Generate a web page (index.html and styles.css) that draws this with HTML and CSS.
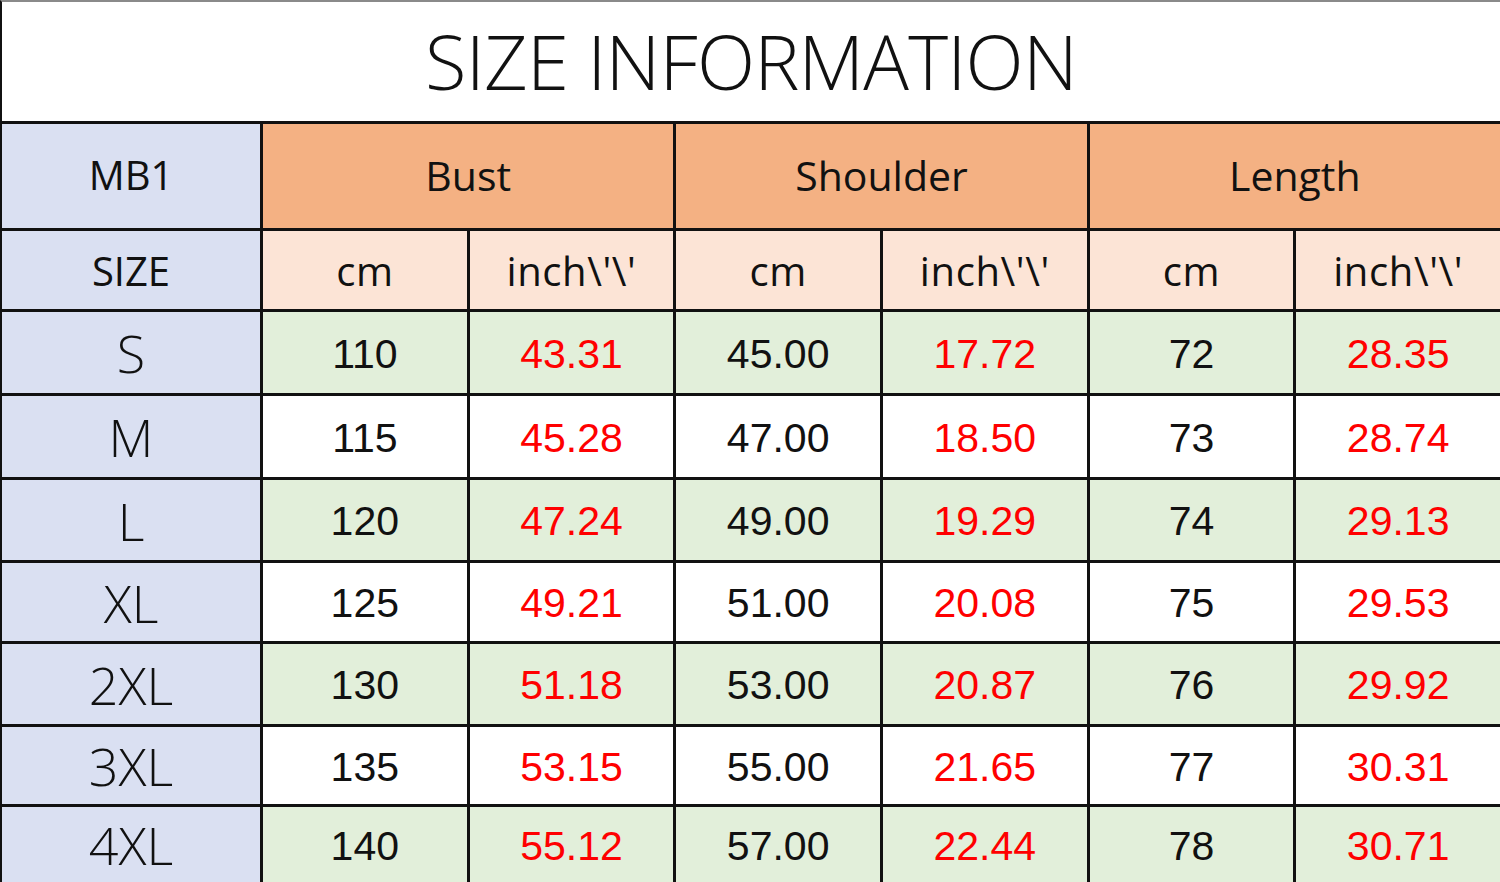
FILE: index.html
```html
<!DOCTYPE html>
<html lang="en">
<head>
<meta charset="utf-8">
<title>Size Information</title>
<link rel="stylesheet" href="styles.css">
</head>
<body>
<div class="chart">
  <div class="title">SIZE INFORMATION</div>

  <div class="cell model">MB1</div>
  <div class="cell group span2">Bust</div>
  <div class="cell group span2">Shoulder</div>
  <div class="cell group span2">Length</div>

  <div class="cell model sizehead">SIZE</div>
  <div class="cell unit">cm</div>
  <div class="cell unit">inch\'\'</div>
  <div class="cell unit">cm</div>
  <div class="cell unit">inch\'\'</div>
  <div class="cell unit">cm</div>
  <div class="cell unit">inch\'\'</div>

  <div class="cell model size">S</div>
  <div class="cell num green">110</div><div class="cell num green red">43.31</div>
  <div class="cell num green">45.00</div><div class="cell num green red">17.72</div>
  <div class="cell num green">72</div><div class="cell num green red">28.35</div>

  <div class="cell model size">M</div>
  <div class="cell num">115</div><div class="cell num red">45.28</div>
  <div class="cell num">47.00</div><div class="cell num red">18.50</div>
  <div class="cell num">73</div><div class="cell num red">28.74</div>

  <div class="cell model size">L</div>
  <div class="cell num green">120</div><div class="cell num green red">47.24</div>
  <div class="cell num green">49.00</div><div class="cell num green red">19.29</div>
  <div class="cell num green">74</div><div class="cell num green red">29.13</div>

  <div class="cell model size">XL</div>
  <div class="cell num">125</div><div class="cell num red">49.21</div>
  <div class="cell num">51.00</div><div class="cell num red">20.08</div>
  <div class="cell num">75</div><div class="cell num red">29.53</div>

  <div class="cell model size">2XL</div>
  <div class="cell num green">130</div><div class="cell num green red">51.18</div>
  <div class="cell num green">53.00</div><div class="cell num green red">20.87</div>
  <div class="cell num green">76</div><div class="cell num green red">29.92</div>

  <div class="cell model size">3XL</div>
  <div class="cell num">135</div><div class="cell num red">53.15</div>
  <div class="cell num">55.00</div><div class="cell num red">21.65</div>
  <div class="cell num">77</div><div class="cell num red">30.31</div>

  <div class="cell model size">4XL</div>
  <div class="cell num green">140</div><div class="cell num green red">55.12</div>
  <div class="cell num green">57.00</div><div class="cell num green red">22.44</div>
  <div class="cell num green">78</div><div class="cell num green red">30.71</div>
</div>
</body>
</html>
```

FILE: styles.css
```css
html, body {
  margin: 0;
  padding: 0;
  background: #ffffff;
  overflow: hidden;
}

.chart {
  box-sizing: border-box;
  width: 1500px;
  height: 882px;
  border-top: 2px solid #8a8a8a;
  border-left: 2px solid #111111;
  background: #111111;
  display: grid;
  grid-template-columns: 258px repeat(6, 1fr);
  grid-template-rows: 119px 104px 78px 81px 81px 80px 78px 80px 77px 1fr;
  column-gap: 3px;
  row-gap: 3px;
  overflow: hidden;
}

.title {
  grid-column: 1 / -1;
  background: #ffffff;
  display: flex;
  align-items: center;
  justify-content: center;
  font-family: "Open Sans", "Noto Sans", sans-serif;
  font-weight: 300;
  font-size: 76px;
  letter-spacing: -0.8px;
  color: #111111;
  padding-bottom: 3px;
}

.cell {
  display: flex;
  align-items: center;
  justify-content: center;
  background: #ffffff;
  color: #111111;
}

.span2 {
  grid-column: span 2;
}

.model {
  background: #dae0f2;
  font-family: "Open Sans", "Noto Sans", sans-serif;
  font-size: 40px;
  font-weight: 400;
  padding-bottom: 3px;
}

.sizehead {
  font-size: 40px;
  padding-bottom: 0;
}

.size {
  font-weight: 300;
  font-size: 52px;
  padding-bottom: 0;
}

.group {
  background: #f4b183;
  font-family: "Open Sans", "Noto Sans", sans-serif;
  font-size: 41px;
  padding-bottom: 3px;
}

.unit {
  background: #fce4d6;
  font-family: "Open Sans", "Noto Sans", sans-serif;
  font-size: 40px;
  letter-spacing: 0.6px;
}

.num {
  font-family: "Liberation Sans", Arial, sans-serif;
  font-size: 41px;
  padding-top: 3px;
}

.green {
  background: #e2efda;
}

.red {
  color: #ff0000;
}
```
